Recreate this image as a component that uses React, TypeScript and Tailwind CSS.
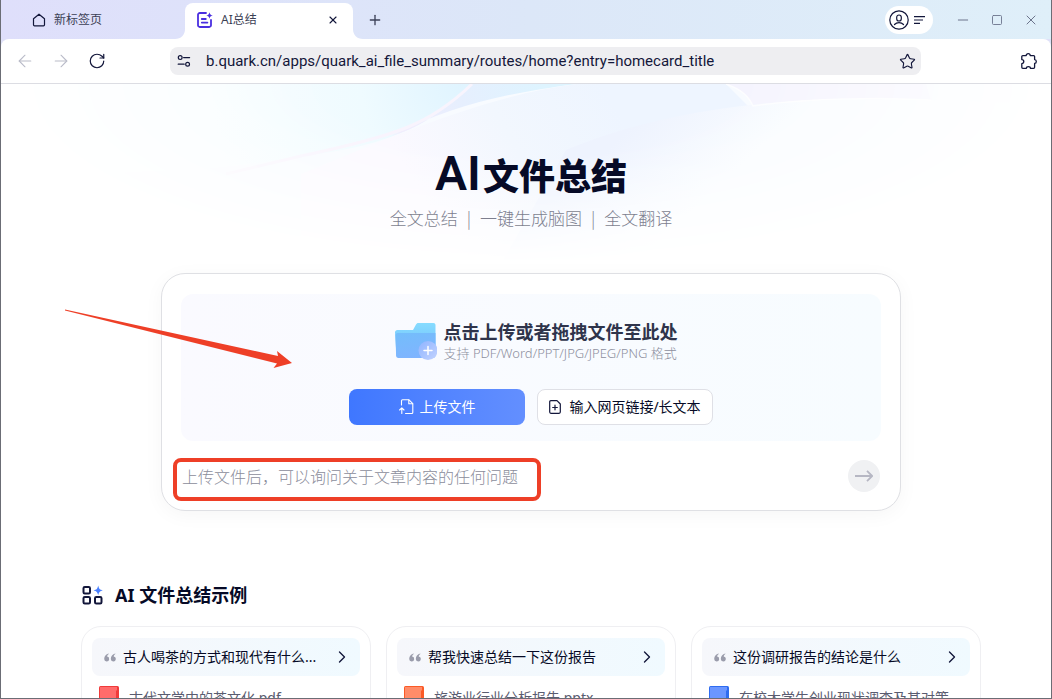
import React from 'react';
import { X, Plus, Minus, Square, ArrowLeft, ArrowRight, RotateCw, Star, ChevronRight } from 'lucide-react';

const HomeIcon: React.FC = () => (
  <svg className="w-[14px] h-[14px]" viewBox="0 0 14 14" fill="none" stroke="#12163a" strokeWidth="1.2" strokeLinejoin="round">
    <path d="M1.5 5.8 7 1.2l5.5 4.6v6a1 1 0 0 1-1 1h-9a1 1 0 0 1-1-1z" />
  </svg>
);

const SummaryIcon: React.FC = () => (
  <svg className="w-4 h-4" viewBox="0 0 16 16" fill="none" stroke="#4a2fe0" strokeWidth="1.8" strokeLinecap="round" strokeLinejoin="round">
    <path d="M9 1H2.8A1.8 1.8 0 0 0 1 2.8v10.4A1.8 1.8 0 0 0 2.8 15h9.4a1.8 1.8 0 0 0 1.8-1.8V8" />
    <path d="M4.8 7h4M4.8 10.6h5.600" />
    <path d="M12.5.2c.4 2.1 1.2 2.9 3.3 3.3-2.1.4-2.9 1.2-3.3 3.3-.4-2.1-1.2-2.9-3.3-3.3 2.1-.4 2.9-1.2 3.3-3.3z" fill="#4a2fe0" stroke="none" />
  </svg>
);

const SiteInfoIcon: React.FC = () => (
  <svg className="w-[14px] h-[14px] shrink-0" viewBox="0 0 14 14" fill="none" stroke="#12163a" strokeWidth="1.2" strokeLinecap="round">
    <circle cx="3.2" cy="3.6" r="1.9" />
    <path d="M6.6 3.6h6" />
    <circle cx="10.6" cy="10.2" r="1.9" />
    <path d="M1.2 10.2h6" />
  </svg>
);

const ExtensionIcon: React.FC = () => (
  <svg className="w-4 h-4" viewBox="0 0 16 16" fill="none" stroke="#12163a" strokeWidth="1.3" strokeLinejoin="round">
    <path d="M1.8 2.6H5.2C5.2 1.4 6 .7 7.2.7s2 .7 2 1.9h3.4a1 1 0 0 1 1 1V6.6c1.1 0 1.7.8 1.7 1.9s-.6 1.9-1.7 1.9v3.900a1 1 0 0 1-1 1H9.4c0-1-.9-1.600-2-1.600s-2 .6-2 1.600H1.800a1 1 0 0 1-1-1V10.600c1.200 0 2-.8 2-2s-.8-2-2-2v-3a1 1 0 0 1 1-1z" />
  </svg>
);

const UserIcon: React.FC = () => (
  <svg className="w-5 h-5" viewBox="0 0 20 20" fill="none" stroke="#12163a" strokeWidth="1.2" strokeLinecap="round">
    <circle cx="10" cy="10" r="9.2" />
    <rect x="7.7" y="5" width="4.6" height="6" rx="2.3" />
    <path d="M5.5 14.5c1.2-1.3 2.7-1.9 4.5-1.9s3.3.6 4.5 1.9" />
  </svg>
);

const FolderIcon: React.FC = () => (
  <svg className="w-[42px] h-[38px]" viewBox="0 0 42 38" fill="none">
    <defs>
      <linearGradient id="folderBack" x1="0" y1="0" x2="0" y2="1">
        <stop offset="0" stopColor="#86dcff" />
        <stop offset="1" stopColor="#6fb8fb" />
      </linearGradient>
      <linearGradient id="folderFront" x1="0.2" y1="0" x2="0.5" y2="1">
        <stop offset="0" stopColor="#74bdfb" />
        <stop offset="1" stopColor="#7fb4ff" />
      </linearGradient>
      <linearGradient id="folderPlus" x1="0" y1="0" x2="1" y2="1">
        <stop offset="0" stopColor="#8fb4ff" />
        <stop offset="1" stopColor="#c3d3ff" />
      </linearGradient>
    </defs>
    <path d="M0 9.5C0 8.1 1 7 2.4 7H18l3-5.500C21.5.6 22.2 0 23.3 0H38.5C39.6 0 40.5.9 40.5 2v31H1.5z" fill="url(#folderBack)" />
    <path d="M.5 12.300C.4 11 1.4 10 2.7 10H40.5v22.500c0 1.400-1 2.500-2.500 2.500H3.500c-1.300 0-2.300-1-2.400-2.300z" fill="url(#folderFront)" />
    <circle cx="33" cy="27.5" r="9.5" fill="url(#folderPlus)" />
    <path d="M33 23.500v8M29 27.500h8" stroke="#fff" strokeWidth="1.5" strokeLinecap="round" />
  </svg>
);

const UploadFileIcon: React.FC = () => (
  <svg className="w-[15px] h-4" viewBox="0 0 15 16" fill="none" stroke="#fff" strokeWidth="1.1" strokeLinecap="round" strokeLinejoin="round">
    <path d="M2.5 6V1.800c0-.6.4-1 1-1H10L13.800 4.600v8.900c0 .6-.4 1-1 1H6.500" />
    <path d="M9.800 1v3.800h3.800" />
    <path d="M2.800 14.500V9M.6 11l2.200-2.200L5 11" />
  </svg>
);

const AddFileIcon: React.FC = () => (
  <svg className="w-3 h-[14px]" viewBox="0 0 12 14" fill="none" stroke="#12163a" strokeWidth="1.2" strokeLinecap="round" strokeLinejoin="round">
    <path d="M8 .7H1.900C1.200.7.7 1.200.7 1.900v10.200c0 .7.500 1.200 1.200 1.200h8.200c.7 0 1.200-.5 1.200-1.200V4z" />
    <path d="M6 5.200v4.600M3.700 7.500h4.600" />
  </svg>
);

const GridIcon: React.FC = () => (
  <svg className="w-[22px] h-5" viewBox="0 0 22 20" fill="none" stroke="#12163a" strokeWidth="2">
    <rect x="2.5" y="2" width="6.5" height="6.5" rx="1.3" />
    <rect x="2.5" y="12" width="6.5" height="6.5" rx="1.3" />
    <rect x="14" y="12" width="6.5" height="6.5" rx="1.3" />
    <path d="M17.200.5c.7 3.200 1.500 4.200 4.600 4.900-3.100.7-3.900 1.700-4.600 4.900-.7-3.200-1.500-4.200-4.600-4.900C15.700 4.700 16.500 3.700 17.200.5z" fill="#4a80ff" stroke="none" />
  </svg>
);

const QuoteIcon: React.FC = () => (
  <svg className="w-3 h-[9px] shrink-0" viewBox="0 0 12 9" fill="#9a9cab">
    <path d="M4.6.4C2 1 .2 3 .2 6a2.500 2.500 0 1 0 2.900-2.500C3.300 2.200 3.800 1.300 4.800.9z" />
    <path d="M11.200.4C8.600 1 6.800 3 6.800 6a2.500 2.500 0 1 0 2.900-2.500c.2-1.300.7-2.200 1.700-2.600z" />
  </svg>
);

// Soft coloured rings behind the title
const HeroBackdrop: React.FC = () => (
  <svg className="absolute inset-x-0 top-0 w-full h-[180px]" viewBox="0 0 1050 180" preserveAspectRatio="none" fill="none" aria-hidden="true">
    <defs>
      <radialGradient id="fade" gradientUnits="userSpaceOnUse" cx="0" cy="0" r="1" gradientTransform="matrix(520 0 0 180 530 0)">
        <stop offset="0.4" stopColor="#fff" />
        <stop offset="1" stopColor="#fff" stopOpacity="0" />
      </radialGradient>
      <radialGradient id="cyan" gradientUnits="userSpaceOnUse" cx="460" cy="0" r="250">
        <stop offset="0" stopColor="#e0f4ff" />
        <stop offset="0.4" stopColor="#effbff" />
        <stop offset="1" stopColor="#f8fdff" />
      </radialGradient>
      <linearGradient id="blue" gradientUnits="userSpaceOnUse" x1="540" y1="0" x2="390" y2="50">
        <stop offset="0" stopColor="#def4ff" />
        <stop offset="0.5" stopColor="#e6effe" />
        <stop offset="1" stopColor="#f4edfd" />
      </linearGradient>
      <linearGradient id="middle" gradientUnits="userSpaceOnUse" x1="600" y1="0" x2="420" y2="110">
        <stop offset="0" stopColor="#eef5ff" />
        <stop offset="0.5" stopColor="#f2f7fe" />
        <stop offset="1" stopColor="#fbf9ff" />
      </linearGradient>
      <linearGradient id="wave" gradientUnits="userSpaceOnUse" x1="650" y1="25" x2="720" y2="100">
        <stop offset="0" stopColor="#eef3fe" />
        <stop offset="1" stopColor="#f9fcff" />
      </linearGradient>
      <mask id="heroMask">
        <rect width="1050" height="180" fill="url(#fade)" />
      </mask>
    </defs>
    <g mask="url(#heroMask)">
      <path d="M0 0H1050V180H0z" fill="#f8fbff" />
      <path d="M470 0C430 40 390 62 300 72C240 84 150 90 0 90V0z" fill="url(#cyan)" />
      <path d="M470 0C440 30 415 45 390 52C450 22 500 10 575 0z" fill="url(#blue)" />
      <path d="M575 0C500 10 430 38 385 55L300 90V180H560L765 40L725 0z" fill="url(#middle)" />
      <path d="M725 0H925L930 16C880 14 810 15 752 22C748 12 740 5 725 0z" fill="#f5f4fe" />
      <path d="M930 16C800 10 670 22 565 66L500 180H1050V20z" fill="url(#wave)" />
      <path d="M471 0C430 40 395 52 300 72C270 79 250 84 225 90" stroke="#f8f4fd" strokeWidth="3" />
      <path d="M725 0C740 5 748 12 752 22C810 14 880 13 930 16" stroke="#fff" strokeOpacity="0.7" strokeWidth="1.5" />
    </g>
  </svg>
);

const examples = [
  { question: '古人喝茶的方式和现代有什么...', file: '古代文学中的茶文化.pdf', main: '#ff6b6b', edge: '#f03a3a' },
  { question: '帮我快速总结一下这份报告', file: '旅游业行业分析报告.pptx', main: '#ff8c69', edge: '#fb5a26' },
  { question: '这份调研报告的结论是什么', file: '在校大学生创业现状调查及其对策', main: '#6b96ff', edge: '#2f6cf0' },
];

const ExampleCard: React.FC<{ question: string; file: string; main: string; edge: string }> = ({ question, file, main, edge }) => (
  <article className="min-w-0 h-40 rounded-[20px] border border-[#efeff2] bg-white px-2.5 pt-[11px]">
    <button className="flex w-full h-[38px] items-center gap-[7px] rounded-lg bg-linear-to-r from-[#f6f7fb] to-[#f0faff] pl-3 pr-2.5 text-left">
      <QuoteIcon />
      <span className="whitespace-nowrap text-sm text-[#060a26]">{question}</span>
      <ChevronRight className="ml-auto w-4 h-4 shrink-0 scale-125 text-[#12163a]" strokeWidth={1.6} />
    </button>
    <div className="mt-2.5 flex items-start gap-2.5 px-[7px]">
      <svg className="w-5 h-6 shrink-0" viewBox="0 0 20 24">
        <rect width="20" height="24" rx="1.5" fill={edge} />
        <path d="M1 1H18V4L17 5V24H1z" fill={main} />
      </svg>
      <span className="whitespace-nowrap text-sm leading-6 text-[#5a5c70]">{file}</span>
    </div>
  </article>
);

const TabStrip: React.FC = () => (
  <header className="flex h-[39px] items-stretch bg-linear-to-r from-[#dfdffb] via-[#dce7f8] to-[#dfeff9] pr-3">
    <button className="flex w-[184px] items-center gap-2 pl-[31px] text-xs text-[#3c3f55]">
      <HomeIcon />
      新标签页
    </button>
    <div className="relative mt-[3px] flex w-[168px] items-center gap-2 rounded-t-lg bg-white pb-[3px] pl-3 pr-3.5 text-xs text-[#3c3f55]">
      <svg className="absolute bottom-0 -left-2.5 w-2.5 h-2.5" viewBox="0 0 10 10">
        <path d="M10 0V10H0C6 10 10 6 10 0z" fill="#fff" />
      </svg>
      <svg className="absolute bottom-0 -right-2.5 w-2.5 h-2.5" viewBox="0 0 10 10">
        <path d="M0 0V10H10C4 10 0 6 0 0z" fill="#fff" />
      </svg>
      <SummaryIcon />
      <span>AI总结</span>
      <button aria-label="关闭标签页" className="ml-auto">
        <X className="w-3 h-3 text-[#12163a]" strokeWidth={2.2} />
      </button>
    </div>
    <button aria-label="新建标签页" className="ml-3.5">
      <Plus className="w-4 h-4 text-[#3c4158]" strokeWidth={2} />
    </button>
    <div className="ml-auto flex items-center gap-[18px] text-[#6c748c]">
      <button aria-label="用户菜单" className="mr-1 flex h-7 w-12 items-center gap-[5px] rounded-full bg-white pl-1">
        <UserIcon />
        <svg className="w-3 h-2" viewBox="0 0 12 8" stroke="#12163a" strokeWidth="1.1">
          <path d="M0 .6H11M0 4H9M0 7.400H6" />
        </svg>
      </button>
      <button aria-label="最小化"><Minus className="w-4 h-4" strokeWidth={1.5} /></button>
      <button aria-label="最大化"><Square className="w-4 h-4 scale-75" strokeWidth={1.8} /></button>
      <button aria-label="关闭"><X className="w-4 h-4" strokeWidth={1.5} /></button>
    </div>
  </header>
);

const AddressBar: React.FC = () => (
  <div className="bg-[#dfe1f8]">
    <nav className="flex h-[45px] items-center rounded-t-lg border-b border-[#dcdde3] bg-white pl-[15px] pr-3.5">
      <div className="flex items-center gap-[18px] text-[#b9bbc8]">
        <button aria-label="后退"><ArrowLeft className="w-[18px] h-[18px] scale-110" strokeWidth={1.3} /></button>
        <button aria-label="前进"><ArrowRight className="w-[18px] h-[18px] scale-110" strokeWidth={1.3} /></button>
        <button aria-label="刷新"><RotateCw className="w-[18px] h-[18px] text-[#12163a]" strokeWidth={1.6} /></button>
      </div>
      <label className="ml-16 mr-[100px] flex h-7 flex-1 items-center rounded-lg bg-[#eeeef1] pl-[7px] pr-[5px]">
        <SiteInfoIcon />
        <input
          aria-label="地址栏"
          className="ml-[15px] min-w-0 flex-1 bg-transparent font-['Roboto','Noto_Sans_CJK_SC',sans-serif] text-[15px] text-[#14173a] outline-none"
          defaultValue="b.quark.cn/apps/quark_ai_file_summary/routes/home?entry=homecard_title"
        />
        <Star className="w-[17px] h-[17px] shrink-0 text-[#12163a]" strokeWidth={1.6} />
      </label>
      <button aria-label="扩展"><ExtensionIcon /></button>
    </nav>
  </div>
);

const UploadPanel: React.FC = () => (
  <section className="relative mx-auto mt-[43px] w-full max-w-[740px] rounded-3xl border border-[#dfe0e4] bg-white px-[19px] pt-5 pb-[18px] shadow-[0_4px_20px_rgba(0,0,0,0.04)]">
    <div className="rounded-xl bg-linear-to-r from-[#fafaff] to-[#f7fcff] pt-[27px] pb-4">
      <div className="flex items-center justify-center gap-[7px] pl-2.5">
        <FolderIcon />
        <div>
          <h2 className="text-lg leading-[22px] font-bold text-[#2f344b]">点击上传或者拖拽文件至此处</h2>
          <p className="text-[13px] leading-5 font-light text-[#8d8f9e]">支持 PDF/Word/PPT/JPG/JPEG/PNG 格式</p>
        </div>
      </div>
      <div className="mt-[26px] flex justify-center gap-3 text-sm">
        <button className="flex w-44 h-9 items-center justify-center gap-1.5 rounded-lg bg-linear-to-r from-[#3f77ff] to-[#638fff] text-white">
          <UploadFileIcon />
          上传文件
        </button>
        <button className="flex w-44 h-9 items-center justify-center gap-2 rounded-lg border border-[#dfe0e6] bg-white text-[#060a26]">
          <AddFileIcon />
          输入网页链接/长文本
        </button>
      </div>
    </div>
    <div className="mt-[19px] flex h-8 items-center px-px">
      <input
        type="text"
        aria-label="提问"
        placeholder="上传文件后，可以询问关于文章内容的任何问题"
        className="min-w-0 flex-1 bg-transparent font-['Noto_Sans_CJK_SC',sans-serif] font-light outline-none placeholder:text-[#8b8d9b]"
      />
      <button aria-label="发送" className="flex w-8 h-8 items-center justify-center rounded-full bg-[#f0f1f3]">
        <svg className="w-[18px] h-3" viewBox="0 0 18 12" fill="none" stroke="#b6b7c3" strokeWidth="1.8">
          <path d="M0 6H17M12 .8 17.200 6 12 11.200" />
        </svg>
      </button>
    </div>

    {/* Red tutorial marks */}
    <div className="pointer-events-none absolute left-[11px] bottom-[9px] w-[368px] h-[43px] rounded-lg border-4 border-[#ee3f27]" />
    <svg className="pointer-events-none absolute -left-[98px] top-[35px] w-[228px] h-[62px]" viewBox="0 0 228 62" fill="#ee3f27">
      <path d="M1 .5 214 47 213 42 228 54 209.500 59 213 54.500 1 1.500z" />
    </svg>
  </section>
);

export default function App() {
  return (
    <div className="flex h-screen flex-col overflow-hidden border-x border-b border-[#6b6d75] bg-white font-['Noto_Sans','Noto_Sans_CJK_SC',sans-serif]">
      <TabStrip />
      <AddressBar />
      <main className="relative min-h-0 flex-1 overflow-hidden pl-2.5">
        <HeroBackdrop />
        <div className="relative pt-[66px] text-center">
          <h1 className="flex items-center justify-center gap-0.5 font-['Noto_Sans_CJK_SC',sans-serif] text-4xl leading-[48px] font-black text-[#060a26]">
            <span className="font-['Liberation_Sans_Narrow',Roboto,sans-serif] text-5xl leading-[48px] font-semibold">AI</span>
            文件总结
          </h1>
          <p className="mt-2 flex justify-center gap-[9px] font-['Noto_Sans_CJK_SC',sans-serif] text-[17px] leading-6 font-light text-[#7d7f8f]">
            <span>全文总结</span>
            <span>|</span>
            <span>一键生成脑图</span>
            <span>|</span>
            <span>全文翻译</span>
          </p>
        </div>
        <UploadPanel />
        <section className="relative mx-auto mt-[70px] w-full max-w-[900px]">
          <h2 className="flex items-center gap-3 text-lg leading-7 font-bold text-[#060a26]">
            <GridIcon />
            AI 文件总结示例
          </h2>
          <div className="mt-[17px] grid grid-cols-3 gap-[15px]">
            {examples.map((item, index) => (
              <ExampleCard key={index} {...item} />
            ))}
          </div>
        </section>
      </main>
    </div>
  );
}
